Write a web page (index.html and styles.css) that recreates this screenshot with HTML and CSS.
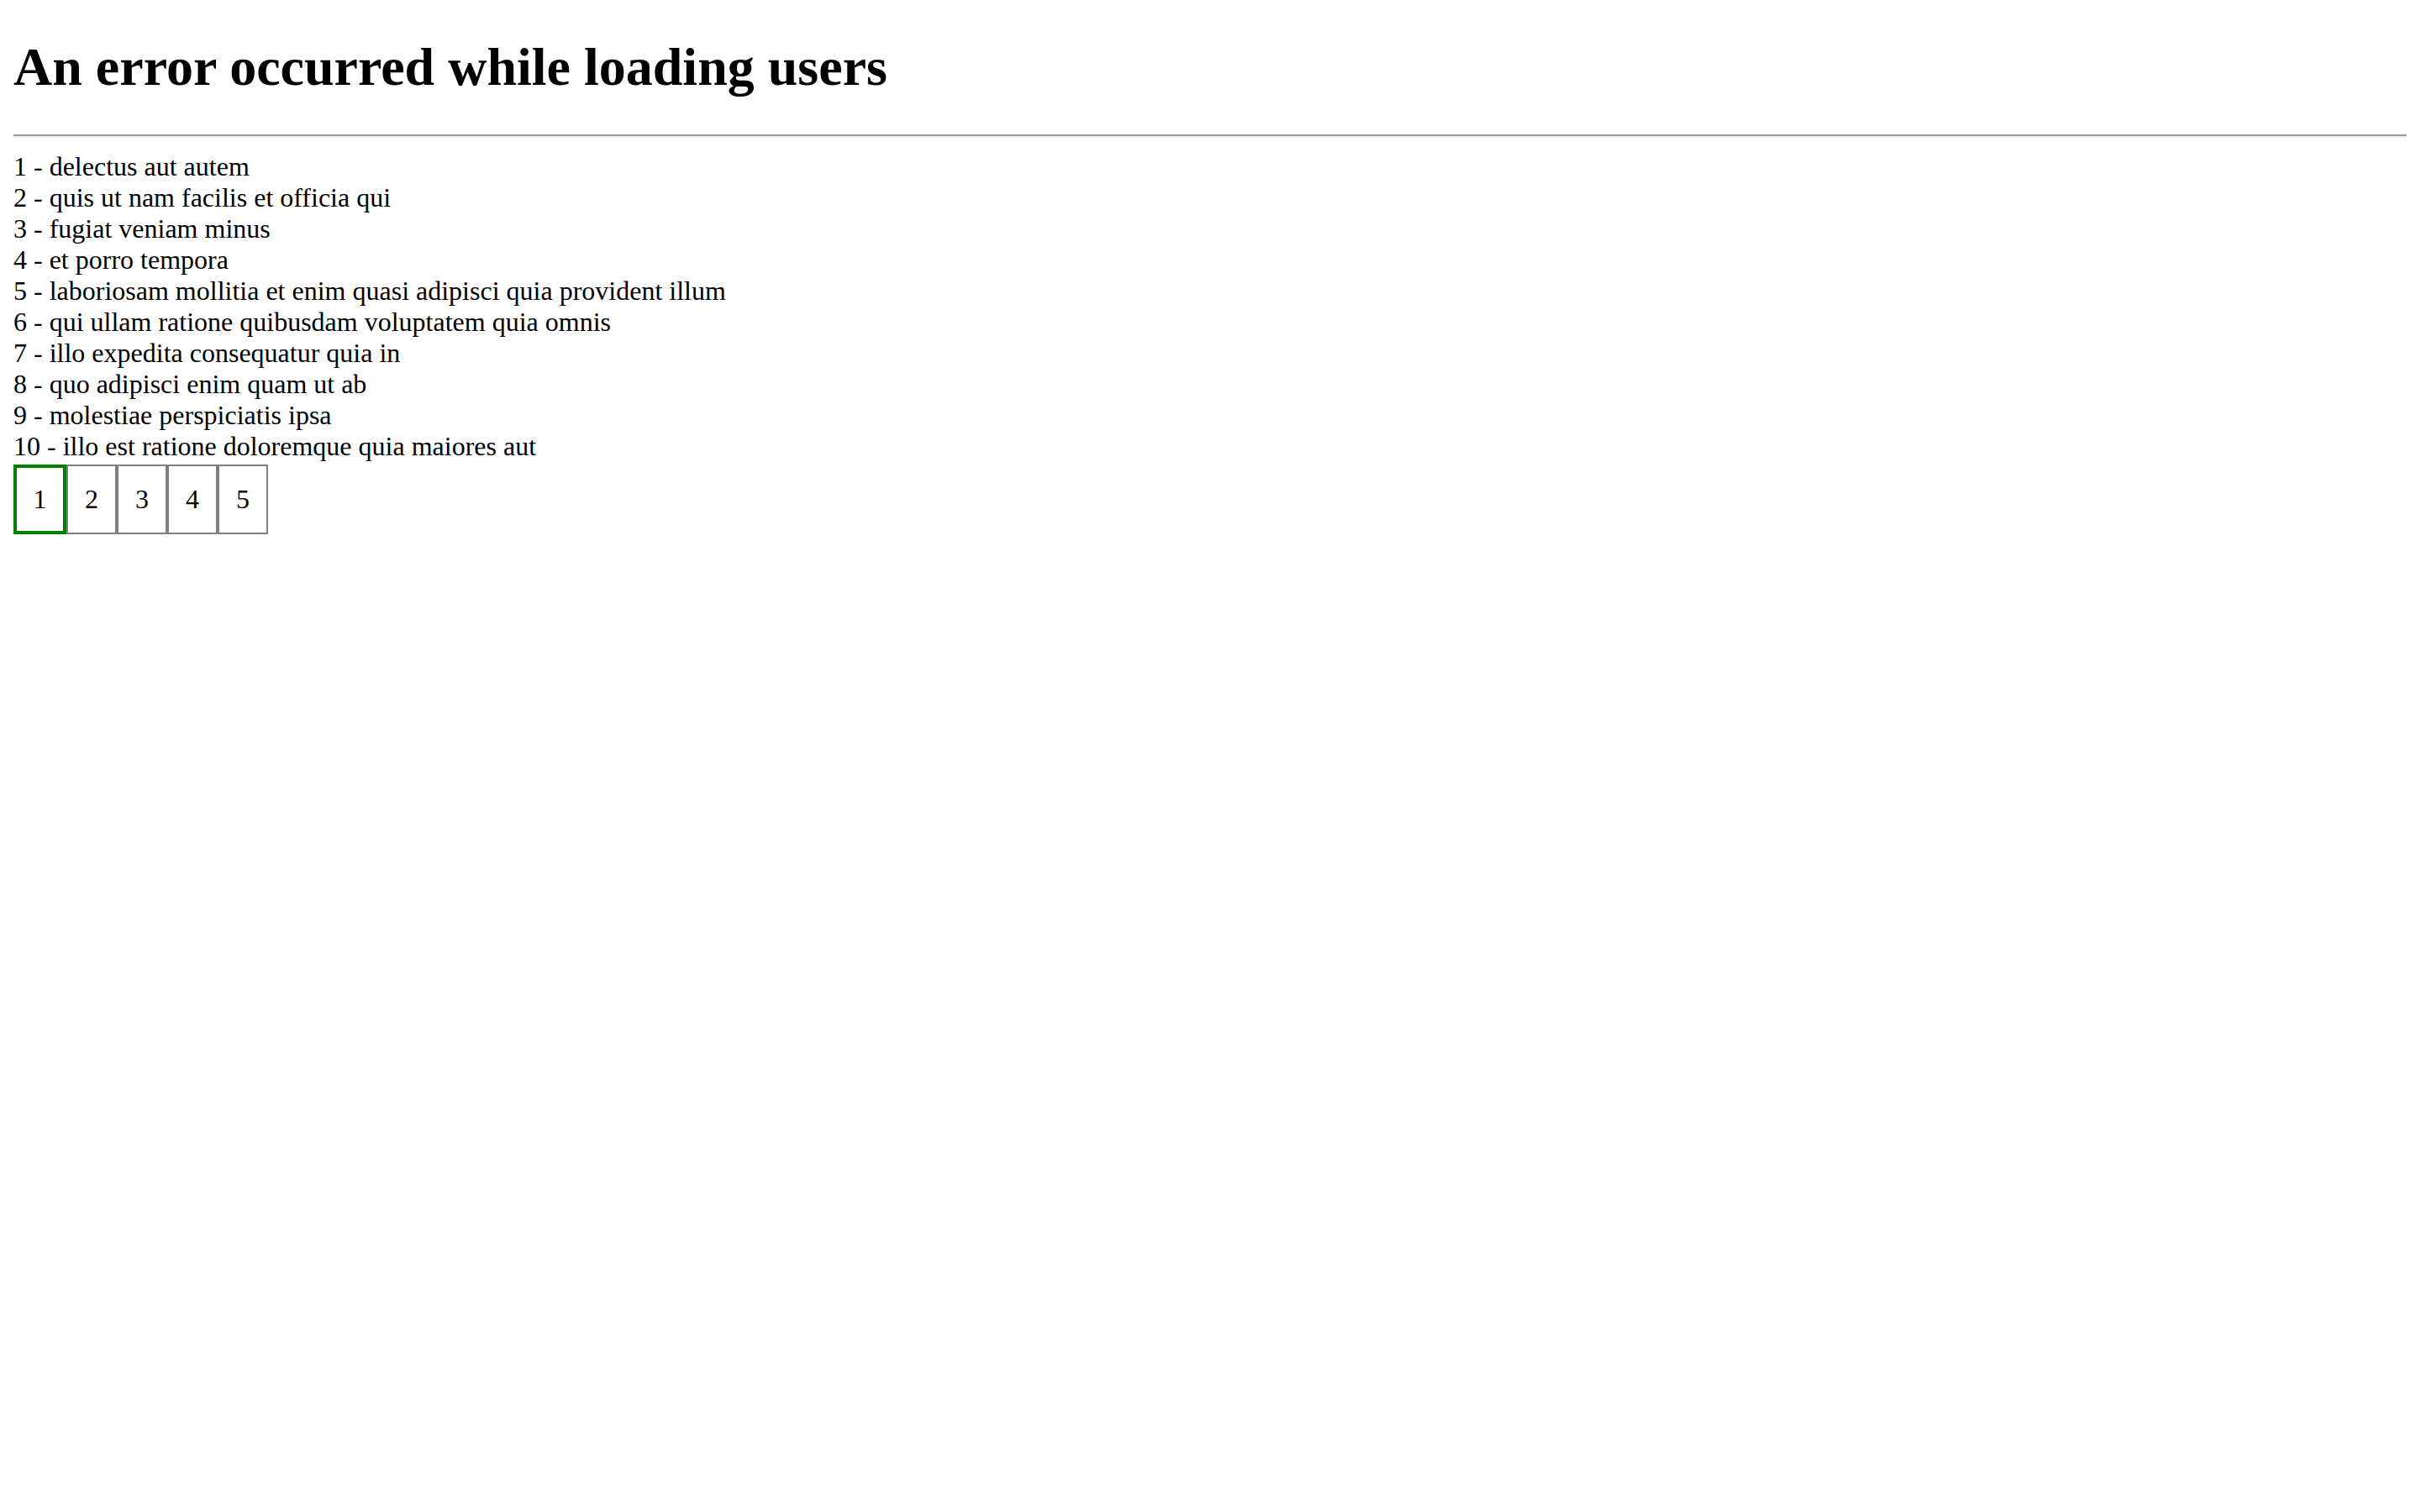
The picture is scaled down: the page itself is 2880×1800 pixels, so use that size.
FILE: index.html
```html
<!DOCTYPE html>
<html>
<head>
<meta charset="utf-8">
<title>Users</title>
<link rel="stylesheet" href="styles.css">
</head>
<body>
<h1 class="title">An error occurred while loading users</h1>
<hr class="divider">
<div class="users">
  <div class="user">1 - delectus aut autem</div>
  <div class="user">2 - quis ut nam facilis et officia qui</div>
  <div class="user">3 - fugiat veniam minus</div>
  <div class="user">4 - et porro tempora</div>
  <div class="user">5 - laboriosam mollitia et enim quasi adipisci quia provident illum</div>
  <div class="user">6 - qui ullam ratione quibusdam voluptatem quia omnis</div>
  <div class="user">7 - illo expedita consequatur quia in</div>
  <div class="user">8 - quo adipisci enim quam ut ab</div>
  <div class="user">9 - molestiae perspiciatis ipsa</div>
  <div class="user">10 - illo est ratione doloremque quia maiores aut</div>
</div>
<div class="pager">
  <button class="page page-active">1</button>
  <button class="page">2</button>
  <button class="page">3</button>
  <button class="page">4</button>
  <button class="page">5</button>
</div>
</body>
</html>
```
FILE: styles.css
```css
html, body {
  background: #ffffff;
}
body {
  margin: 0;
  padding: 0 16px 16px;
  font-family: "Liberation Serif", "Times New Roman", serif;
  font-size: 32px;
  line-height: normal;
  color: #000000;
}
.title {
  font-size: 64px;
  font-weight: bold;
  margin: 42.88px 0;
  line-height: normal;
}
.divider {
  height: 0;
  margin: 16px 0;
  border: none;
  border-top: 2px solid #9a9a9a;
  border-bottom: 2px solid #eeeeee;
}
.users {
  display: flex;
  flex-direction: column;
}
.user {
  line-height: normal;
}
.pager {
  display: flex;
  margin-top: 3px;
}
.page {
  box-sizing: border-box;
  width: 60px;
  height: 83px;
  margin: 0;
  padding: 0;
  background: #ffffff;
  border: 2px solid #808080;
  font-family: "Liberation Serif", "Times New Roman", serif;
  font-size: 32px;
  color: #000000;
  display: flex;
  align-items: center;
  justify-content: center;
}
.page-active {
  width: 63px;
  border: 4px solid #008000;
}
```
